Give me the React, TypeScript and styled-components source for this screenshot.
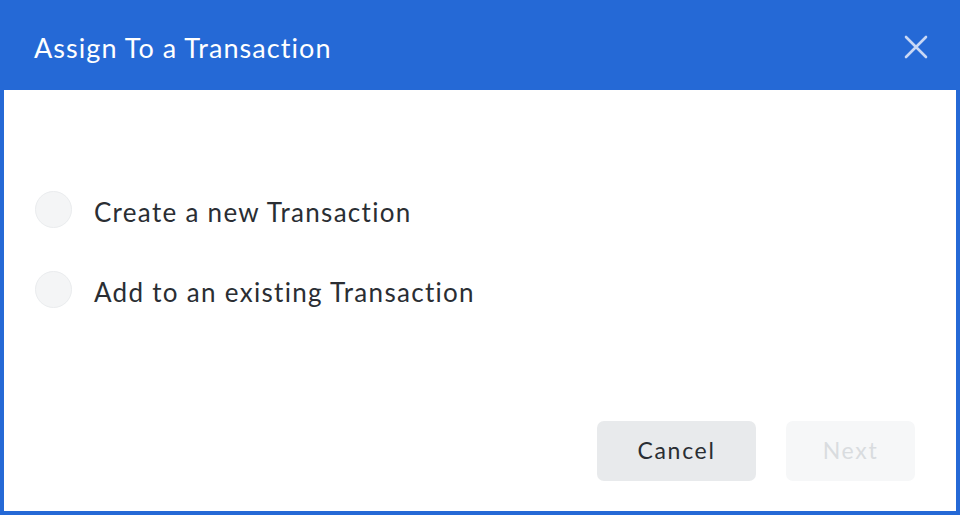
import React, { useState } from "react";
import styled, { createGlobalStyle } from "styled-components";

const Global = createGlobalStyle`
  html, body { margin: 0; padding: 0; }
  body { background: #2569d6; font-family: "Lato", "Noto Sans", sans-serif; }
  * { box-sizing: border-box; }
`;

const Dialog = styled.div`
  width: 960px;
  height: 515px;
  background: #2569d6;
  display: flex;
  flex-direction: column;
  padding: 0 4px 4px 4px;
`;

const Header = styled.header`
  height: 90px;
  display: flex;
  align-items: center;
  justify-content: space-between;
  padding: 0 24px 0 30px;
  flex-shrink: 0;
`;

const Title = styled.h1`
  margin: 0;
  font-size: 27px;
  font-weight: 400;
  color: #ffffff;
  letter-spacing: 1.05px;
  padding-top: 4px;
`;

const CloseButton = styled.button`
  width: 32px;
  height: 32px;
  border: 0;
  padding: 0;
  background: transparent;
  display: flex;
  align-items: center;
  justify-content: center;
  cursor: pointer;
  margin-top: 4px;
`;

const Body = styled.div`
  flex: 1;
  background: #ffffff;
  display: flex;
  flex-direction: column;
  padding: 101px 41px 30px 31px;
`;

const Options = styled.div`
  display: flex;
  flex-direction: column;
  gap: 43px;
  flex: 1;
`;

const Option = styled.label`
  display: flex;
  align-items: center;
  gap: 22px;
  cursor: pointer;
`;

const Radio = styled.span<{ $checked: boolean }>`
  width: 37px;
  height: 37px;
  border-radius: 50%;
  background: #f4f5f6;
  border: 1px solid #eaecee;
  flex-shrink: 0;
  display: flex;
  align-items: center;
  justify-content: center;
  &::after {
    content: "";
    width: 15px;
    height: 15px;
    border-radius: 50%;
    background: #2569d6;
    display: ${(p) => (p.$checked ? "block" : "none")};
  }
`;

const OptionText = styled.span`
  font-size: 26px;
  color: #2a2e33;
  letter-spacing: 1.3px;
  padding-top: 4px;
`;

const Footer = styled.div`
  display: flex;
  justify-content: flex-end;
  gap: 30px;
`;

const Button = styled.button<{ $variant: "secondary" | "disabled"; $w: number }>`
  width: ${(p) => p.$w}px;
  height: 60px;
  border: 0;
  border-radius: 7px;
  font-family: "Lato", "Noto Sans", sans-serif;
  font-size: 23px;
  letter-spacing: 1.7px;
  padding: 0 0 2px;
  background: ${(p) => (p.$variant === "secondary" ? "#e8eaec" : "#f6f7f8")};
  color: ${(p) => (p.$variant === "secondary" ? "#2a2e33" : "#d9dcdf")};
  cursor: ${(p) => (p.$variant === "disabled" ? "default" : "pointer")};
`;

export default function App() {
  const [choice, setChoice] = useState<string | null>(null);
  const options = ["Create a new Transaction", "Add to an existing Transaction"];
  return (
    <>
      <Global />
      <Dialog>
        <Header>
          <Title>Assign To a Transaction</Title>
          <CloseButton aria-label="Close">
            <svg width="24" height="24" viewBox="0 0 24 24" fill="none">
              <path d="M2 2L22 22M22 2L2 22" stroke="#c9d8f5" strokeWidth="2.6" strokeLinecap="round" />
            </svg>
          </CloseButton>
        </Header>
        <Body>
          <Options>
            {options.map((o) => (
              <Option key={o} onClick={() => setChoice(o)}>
                <Radio $checked={choice === o} />
                <OptionText>{o}</OptionText>
              </Option>
            ))}
          </Options>
          <Footer>
            <Button $variant="secondary" $w={159}>Cancel</Button>
            <Button $variant="disabled" $w={129} disabled={!choice}>Next</Button>
          </Footer>
        </Body>
      </Dialog>
    </>
  );
}
